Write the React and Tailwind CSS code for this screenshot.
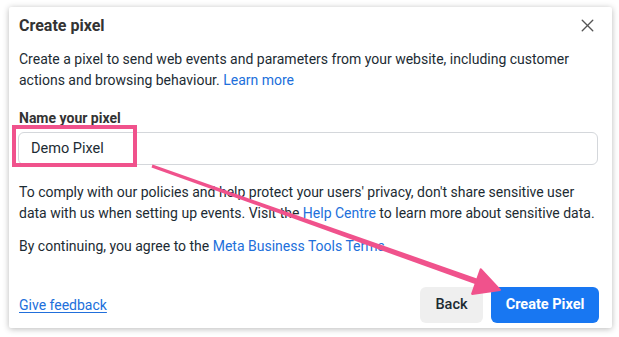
import { X } from 'lucide-react'

const font = { fontFamily: 'Roboto, "Liberation Sans", Arial, sans-serif' }

function Annotation() {
  return (
    <svg className="absolute left-0 top-0 pointer-events-none" width="619" height="337" viewBox="0 0 619 337">
      <rect x="14" y="127" width="121" height="38" fill="none" stroke="#f0528c" strokeWidth="4" />
      <polygon points="151.5,167.4 152.5,164.6 479,279.2 477,284.8" fill="#f0528c" />
      <polygon points="500,290 480.7,269.3 472.1,293.9" fill="#f0528c" strokeLinejoin="round" stroke="#f0528c" strokeWidth="2" />
    </svg>
  )
}

export default function App() {
  return (
    <div className="relative w-[619px] h-[337px] bg-white overflow-hidden" style={font}>
      <div className="pt-[7px] pl-[9px]">
        <div className="w-[603px] h-[321px] bg-white rounded-[2px] shadow-[0_1px_6px_rgba(0,0,0,0.28)] flex flex-col pl-[10px] pr-[14px] text-[#1c2b33]">
          <div className="flex items-center justify-between pt-[8px]">
            <h2 className="text-[16px] leading-[20px] font-bold text-[#333]">Create pixel</h2>
            <X className="w-[21px] h-[21px] text-[#555]" strokeWidth={1.6} />
          </div>

          <p className="mt-[13px] text-[14px] leading-[21px]">
            Create a pixel to send web events and parameters from your website, including customer actions and browsing behaviour.{' '}
            <a className="text-[#216fdb]">Learn more</a>
          </p>

          <label className="mt-[17px] text-[14px] leading-[20px] font-bold text-[#333]">Name your pixel</label>
          <div className="mt-[4px] -ml-[1px] h-[33px] rounded-[6px] border border-[#d4d7db] flex items-center pl-[12px] text-[14.5px]">
            Demo Pixel
          </div>

          <p className="mt-[17px] text-[14px] leading-[21px]">
            To comply with our policies and help protect your users' privacy, don't share sensitive user data with us when setting up events. Visit the{' '}
            <a className="text-[#216fdb]">Help Centre</a> to learn more about sensitive data.
          </p>

          <p className="mt-[12px] text-[14px] leading-[21px]">
            By continuing, you agree to the <a className="text-[#216fdb]">Meta Business Tools Terms</a>.
          </p>

          <div className="mt-auto mb-[5px] flex items-center justify-between">
            <a className="text-[14px] text-[#216fdb] underline underline-offset-2">Give feedback</a>
            <div className="flex gap-[8px] -mr-[1px]">
              <button className="w-[63px] h-[36px] rounded-[6px] bg-[#efefef] text-[14.5px] font-medium text-[#1c2b33]">Back</button>
              <button className="w-[108px] h-[36px] rounded-[6px] bg-[#1877f2] text-[14.5px] font-bold text-white">Create Pixel</button>
            </div>
          </div>
        </div>
      </div>
      <Annotation />
    </div>
  )
}
